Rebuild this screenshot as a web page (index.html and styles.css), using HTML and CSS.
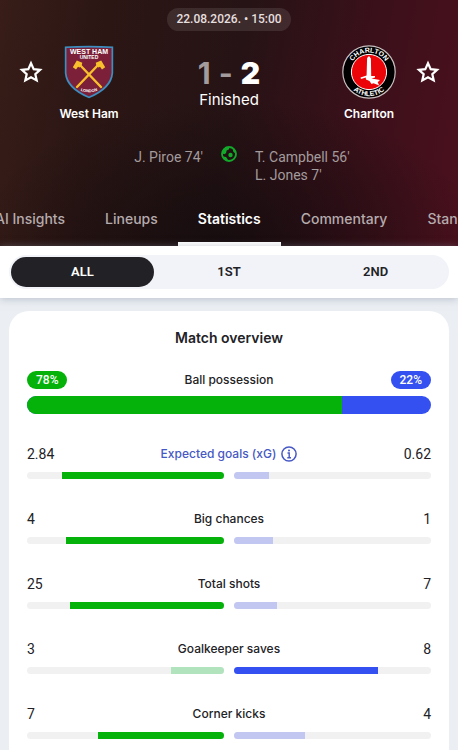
FILE: index.html
```html
<!DOCTYPE html>
<html lang="en">
<head>
<meta charset="utf-8">
<meta name="viewport" content="width=device-width, initial-scale=1">
<title>West Ham - Charlton</title>
<link rel="stylesheet" href="styles.css">
</head>
<body>
<header class="hero">
  <time class="date" datetime="2026-08-22T15:00">22.08.2026. • 15:00</time>
  <div class="match">
    <button class="star" type="button" aria-label="Follow West Ham">
      <svg viewBox="0 0 24 24"><path d="M12 3.200l2.700 5.900 6.400.7-4.800 4.300 1.400 6.300-5.700-3.200-5.700 3.200 1.400-6.300-4.800-4.300 6.400-.7z"/></svg>
    </button>
    <div class="team">
      <svg class="crest" viewBox="0 0 54 54" aria-hidden="true">
        <path d="M2.800 1.500Q27 0 51.200 1.500V28Q50 44 27 53.300Q4 44 2.800 28Z" fill="#3c8fc0"/>
        <path d="M4.500 3.100Q27 1.700 49.500 3.100V28Q48 42.500 27 51.400Q6 42.500 4.500 28Z" fill="#7b2038"/>
        <path d="M15 42L37 19M39 42L17 19" stroke="#f8c02c" stroke-width="2.400" stroke-linecap="round"/>
        <path d="M34.500 21l-.8-3.200 5.500-2.300 4 6.700-3.200 2.200-2-2.600-1.500.8zM19.500 21l.8-3.200-5.500-2.300-4 6.700 3.200 2.200 2-2.600 1.500.8z" fill="#f8c02c"/>
        <path id="london" d="M16 44.500Q27 50 38 44.500" fill="none"/>
        <text class="crest-name" x="27" y="9">WEST HAM</text>
        <text class="crest-sub" x="27" y="13.500">UNITED</text>
        <text class="crest-city"><textPath href="#london" startOffset="50%">LONDON</textPath></text>
      </svg>
      <span class="team-name">West Ham</span>
    </div>
    <div class="result">
      <div class="score"><span>1</span><span>-</span><strong>2</strong></div>
      <div class="status">Finished</div>
    </div>
    <div class="team">
      <svg class="crest" viewBox="0 0 54 54" aria-hidden="true">
        <circle cx="27" cy="27" r="26.200" fill="#000" stroke="#c9bfc0" stroke-width="1.200"/>
        <circle cx="27" cy="27" r="17.600" fill="#ec0508" stroke="#fff" stroke-width="1"/>
        <path d="M27 11l1.900 2.500.3 17.500H33v1.500l-3.500 1 8.500 1.500-2.300 2.200 1.500 3.300-5.700-2.200-2 .8-2-3-3.500-1.500-.3-2-4.700 1.300-.5-1.500 6.100-1.800.5-17.500z" fill="#fff"/>
        <path id="top-arc" d="M7.500 27A19.500 19.500 0 0 1 46.500 27" fill="none"/>
        <path id="bottom-arc" d="M3 27A24 24 0 0 0 51 27" fill="none"/>
        <text class="ring-name"><textPath href="#top-arc" startOffset="50%">CHARLTON</textPath></text>
        <text class="ring-name"><textPath href="#bottom-arc" startOffset="50%">ATHLETIC</textPath></text>
      </svg>
      <span class="team-name">Charlton</span>
    </div>
    <button class="star" type="button" aria-label="Follow Charlton">
      <svg viewBox="0 0 24 24"><path d="M12 3.200l2.700 5.900 6.400.7-4.800 4.300 1.400 6.300-5.700-3.200-5.700 3.200 1.400-6.300-4.800-4.300 6.400-.7z"/></svg>
    </button>
  </div>
  <div class="scorers">
    <div class="scorers-home">J. Piroe 74'</div>
    <svg class="ball" viewBox="0 0 16 16" aria-hidden="true">
      <circle cx="8" cy="8" r="7" fill="none" stroke="#13a92b" stroke-width="1.800"/>
      <path d="M1.500 5L4.500 1.500 8.500 1.200 7.800 3.600 5.600 4.600 5 7.200 3.200 8.200 1.200 7.500zM11.500 2L14.800 5.500 14.500 7.500 12.300 5.800zM2 10.500l3 .5 1.500 2 .5 2-3.500-1.500z" fill="#13a92b"/>
      <circle cx="9.500" cy="9" r="2.200" fill="#13a92b"/>
    </svg>
    <div>T. Campbell 56'<br>L. Jones 7'</div>
  </div>
  <nav class="tabs">
    <a href="#insights">AI Insights</a>
    <a href="#lineups">Lineups</a>
    <a class="current" href="#statistics" aria-current="page">Statistics</a>
    <a href="#commentary">Commentary</a>
    <a href="#standings">Standings</a>
  </nav>
</header>
<div class="filter-bar">
  <div class="segments">
    <button class="segment selected" type="button" aria-pressed="true">ALL</button>
    <button class="segment" type="button" aria-pressed="false">1ST</button>
    <button class="segment" type="button" aria-pressed="false">2ND</button>
  </div>
</div>
<main class="card">
  <h2>Match overview</h2>
  <section class="possession">
    <div class="row"><span class="badge home">78%</span><span class="label">Ball possession</span><span class="badge away">22%</span></div>
    <div class="split"><div class="home" style="width:78%"></div></div>
  </section>
  <section class="stat">
    <div class="row"><span>2.84</span><a class="label info" href="#xg">Expected goals (xG)
      <svg viewBox="0 0 16 16" aria-hidden="true"><circle cx="8" cy="8" r="7.100" fill="none" stroke="currentColor" stroke-width="1.500"/><path d="M6.500 7H8.200V11.500M6.300 11.700H10" fill="none" stroke="currentColor" stroke-width="1.400"/><circle cx="8" cy="4.500" r="1" fill="currentColor"/></svg></a><span>0.62</span></div>
    <div class="bars"><div class="track left"><div class="fill home" style="width:82%"></div></div><div class="track"><div class="fill away-soft" style="width:18%"></div></div></div>
  </section>
  <section class="stat">
    <div class="row"><span>4</span><span class="label">Big chances</span><span>1</span></div>
    <div class="bars"><div class="track left"><div class="fill home" style="width:80%"></div></div><div class="track"><div class="fill away-soft" style="width:20%"></div></div></div>
  </section>
  <section class="stat">
    <div class="row"><span>25</span><span class="label">Total shots</span><span>7</span></div>
    <div class="bars"><div class="track left"><div class="fill home" style="width:78%"></div></div><div class="track"><div class="fill away-soft" style="width:22%"></div></div></div>
  </section>
  <section class="stat">
    <div class="row"><span>3</span><span class="label">Goalkeeper saves</span><span>8</span></div>
    <div class="bars"><div class="track left"><div class="fill home-soft" style="width:27%"></div></div><div class="track"><div class="fill away" style="width:73%"></div></div></div>
  </section>
  <section class="stat">
    <div class="row"><span>7</span><span class="label">Corner kicks</span><span>4</span></div>
    <div class="bars"><div class="track left"><div class="fill home" style="width:64%"></div></div><div class="track"><div class="fill away-soft" style="width:36%"></div></div></div>
  </section>
</main>
</body>
</html>
```
FILE: styles.css
```css
* { box-sizing: border-box; }
body {
  margin: 0;
  background: #ebeff4;
  color: #222226;
  font-family: Inter, "Liberation Sans", sans-serif;
  font-size: 14px;
}
button { border: 0; padding: 0; background: none; font: inherit; color: inherit; }
a { color: inherit; text-decoration: none; }

.hero {
  display: flex;
  flex-direction: column;
  padding-top: 8px;
  color: #fff;
  background:
    radial-gradient(ellipse 55% 60% at 50% 100%, #120b0dcc, #120b0d00),
    linear-gradient(100deg, #381d18 0%, #2b1614 22%, #261315 50%, #3a101a 75%, #4b101d 100%);
}
.date {
  align-self: center;
  padding: 0 9px;
  border-radius: 12px;
  background: #ffffff1a;
  color: #e6dfdf;
  font-family: Roboto, "Liberation Sans", sans-serif;
  font-size: 12px;
  font-weight: 500;
  line-height: 23px;
}
.match {
  display: grid;
  grid-template-columns: 61px 56px 1fr 56px 61px;
  margin-top: 14px;
}
.star { height: 54px; }
.star svg { display: block; width: 24px; height: 24px; margin: auto; }
.star path { fill: none; stroke: #fff; stroke-width: 2.2; }
.team { display: flex; flex-direction: column; align-items: center; gap: 7px; }
.crest { width: 54px; height: 54px; }
.crest text {
  fill: #fff;
  font-family: "Liberation Sans", sans-serif;
  font-weight: 700;
  text-anchor: middle;
}
.crest .crest-name { font-size: 7px; }
.crest .crest-sub { font-size: 5px; }
.crest .crest-city { font-size: 4px; }
.crest .ring-name { font-size: 7px; }
.team-name { font-size: 12px; font-weight: 600; line-height: 16px; white-space: nowrap; }
.result { padding-top: 11px; text-align: center; }
.score {
  display: flex;
  justify-content: center;
  gap: 8px;
  color: #a39b9c;
  font-size: 30px;
  font-weight: 700;
  line-height: 34px;
}
.score strong { color: #fff; }
.status { font-size: 15px; line-height: 20px; }
.scorers {
  display: grid;
  grid-template-columns: 1fr 16px 1fr;
  column-gap: 18px;
  margin-top: 26px;
  color: #a39b9c;
  font-family: Roboto, "Liberation Sans", sans-serif;
  line-height: 18px;
}
.scorers-home { text-align: right; }
.ball { width: 16px; height: 16px; margin-top: -2px; }
.tabs {
  display: flex;
  margin-top: 10px;
  margin-left: -25px;
  overflow: hidden;
  color: #b5abad;
  font-weight: 500;
  line-height: 50px;
}
.tabs a { flex: none; height: 52px; padding: 0 20px; }
.tabs .current { border-bottom: 4px solid #fff; color: #fff; font-weight: 600; }

.filter-bar {
  position: relative;
  padding: 9px;
  background: #fff;
  box-shadow: 0 1px 8px #8890a080;
}
.segments {
  display: grid;
  grid-template-columns: repeat(3, 1fr);
  gap: 4px;
  padding: 2px;
  border-radius: 17px;
  background: #f2f3f8;
}
.segment {
  border-radius: 15px;
  font-family: Roboto, "Liberation Sans", sans-serif;
  font-size: 13px;
  font-weight: 600;
  line-height: 30px;
}
.segment.selected { background: #222226; color: #fff; }

.card {
  margin: 13px 9px 0;
  padding: 17px 18px 30px;
  border-radius: 20px;
  background: #fff;
}
h2 { margin: 0; font-size: 14px; font-weight: 600; line-height: 20px; text-align: center; }
.possession { margin-top: 22px; }
.row {
  display: grid;
  grid-template-columns: 1fr auto 1fr;
  align-items: center;
  font-family: Roboto, "Liberation Sans", sans-serif;
  line-height: 20px;
}
.row > :last-child { justify-self: end; }
.row > :first-child { justify-self: start; }
.label { font-family: Inter, "Liberation Sans", sans-serif; font-size: 12px; font-weight: 500; }
.info { display: flex; align-items: center; gap: 5px; color: #4658c4; }
.info svg { width: 16px; height: 16px; }
.row .badge {
  padding: 0 9px;
  border-radius: 9px;
  color: #fff;
  font-size: 12px;
  font-weight: 500;
  line-height: 18px;
}
.home { background: #05b20a; }
.away { background: #3450f0; }
.home-soft { background: #b1e3bd; }
.away-soft { background: #c1c7f1; }
.split { height: 18px; margin-top: 6px; border-radius: 9px; overflow: hidden; background: #3450f0; }
.split .home { height: 100%; }
.stat { margin-top: 30px; }
.bars { display: grid; grid-template-columns: 1fr 1fr; gap: 10px; margin-top: 8px; }
.track { display: flex; height: 7px; border-radius: 4px; overflow: hidden; background: #f1f1f2; }
.track.left { justify-content: flex-end; }
```
